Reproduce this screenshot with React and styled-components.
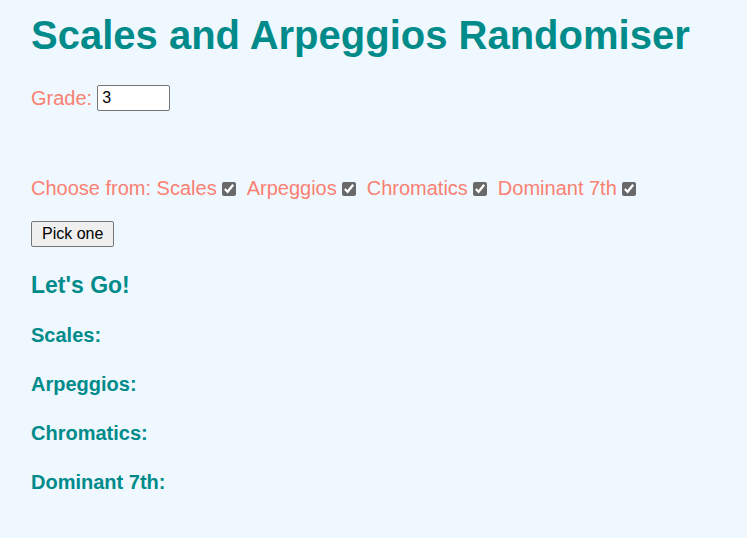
import styled, { createGlobalStyle } from 'styled-components';

const GlobalStyle = createGlobalStyle`
  body {
    margin: 0;
    padding: 0 31px;
    background: aliceblue;
    font-family: "Liberation Sans", Arial, sans-serif;
  }
`;

const Title = styled.h1`
  color: darkcyan;
  font-size: 40px;
  margin: 13px 0 27px;
`;

const Row = styled.div`
  display: flex;
  align-items: center;
  color: salmon;
  font-size: 20px;
  margin-bottom: ${({ gap }) => gap || 0}px;
`;

const GradeInput = styled.input`
  width: 73px;
  height: 26px;
  margin-left: 5px;
  padding: 1px 4px;
  font-size: 16px;
  font-family: "Liberation Sans", Arial, sans-serif;
  border: 1px solid #767676;
  border-radius: 2px;
  box-sizing: border-box;
`;

const Option = styled.label`
  display: inline-flex;
  align-items: center;
  margin-right: 11px;
`;

const Check = styled.input.attrs({ type: 'checkbox' })`
  accent-color: dimgray;
  width: 14px;
  height: 14px;
  margin: 0 0 0 5px;
`;

const PickButton = styled.button`
  font-family: "Liberation Sans", Arial, sans-serif;
  font-size: 16px;
  padding: 2px 10px;
  height: 26px;
  border: 1px solid #767676;
  border-radius: 2px;
  background: #efefef;
  color: #000;
`;

const SubTitle = styled.h3`
  color: darkcyan;
  font-size: 23px;
  margin: 25px 0 25px;
`;

const Result = styled.h4`
  color: darkcyan;
  font-size: 20px;
  margin: 0 0 26px;
`;

const options = ['Scales', 'Arpeggios', 'Chromatics', 'Dominant 7th'];

const App = () => {
  return (
    <>
      <GlobalStyle />
      <Title>Scales and Arpeggios Randomiser</Title>
      <Row gap={66}>
        Grade: <GradeInput defaultValue="3" />
      </Row>
      <Row gap={21}>
        <span>Choose from:&nbsp;</span>
        {options.map((o) => (
          <Option key={o}>
            {o}
            <Check defaultChecked />
          </Option>
        ))}
      </Row>
      <PickButton>Pick one</PickButton>
      <SubTitle>Let's Go!</SubTitle>
      {options.map((o) => (
        <Result key={o}>{o}:</Result>
      ))}
    </>
  );
};

export default App;
